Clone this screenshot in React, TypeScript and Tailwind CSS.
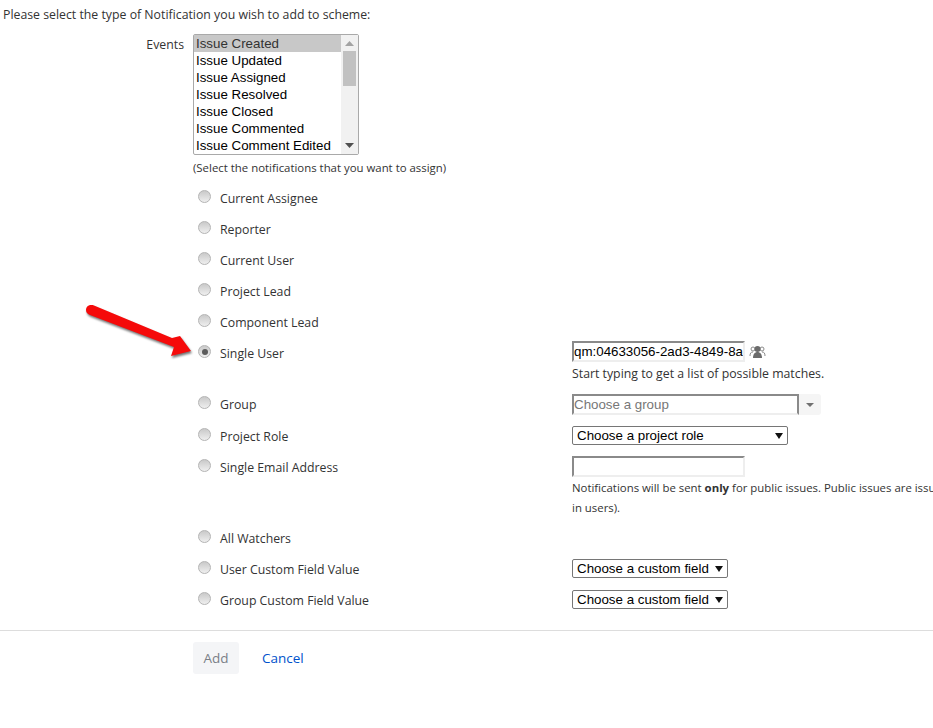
const events = [
  'Issue Created',
  'Issue Updated',
  'Issue Assigned',
  'Issue Resolved',
  'Issue Closed',
  'Issue Commented',
  'Issue Comment Edited',
];

function Radio({ checked = false }: { checked?: boolean }) {
  return (
    <span className="flex h-[13px] w-[13px] shrink-0 items-center justify-center rounded-full border border-[#b4b4b4] bg-gradient-to-b from-[#c9c9c9] to-[#efefef]">
      {checked && <span className="h-[6px] w-[6px] rounded-full bg-[#5c5c5c]" />}
    </span>
  );
}

function Row({
  label,
  checked,
  className,
  children,
}: {
  label: string;
  checked?: boolean;
  className: string;
  children?: React.ReactNode;
}) {
  return (
    <div className={`flex items-start ${className}`}>
      <div className="ml-[198px] mt-[2px]">
        <Radio checked={checked} />
      </div>
      <div className="ml-[9px] mt-[2px] w-[352px] shrink-0 leading-[18px] text-[#333]">{label}</div>
      <div className="min-w-0 flex-1">{children}</div>
    </div>
  );
}

function NativeSelect({ text, width }: { text: string; width: string }) {
  return (
    <div className={`flex h-[19px] items-center justify-between whitespace-nowrap rounded-[2px] border border-[#767676] bg-white pl-[4px] pr-[4px] font-['Liberation_Sans',sans-serif] text-[13.33px] text-black ${width}`}>
      <span>{text}</span>
      <svg width="8" height="6" viewBox="0 0 8 6">
        <path d="M0 0h8L4 6z" fill="#111" />
      </svg>
    </div>
  );
}

function Input({ children }: { children?: React.ReactNode }) {
  return (
    <div className="h-[21px] w-[173px] overflow-hidden whitespace-nowrap border-2 border-b-[#eee] border-l-[#8a8a8a] border-r-[#eee] border-t-[#8a8a8a] bg-white font-['Liberation_Sans',sans-serif] text-[13.33px] leading-[17px] text-black">
      {children}
    </div>
  );
}

export default function App() {
  return (
    <div className="relative h-[728px] w-[933px] overflow-hidden bg-white font-['Open_Sans',sans-serif] text-[12.3px] text-[#333]">
      <p className="pl-[3px] pt-[6px] leading-[18px]">Please select the type of Notification you wish to add to scheme:</p>

      <div className="mt-[10px] flex items-start">
        <label className="mt-[2px] w-[184px] text-right leading-[18px]">Events</label>
        <div className="ml-[9px] flex h-[121px] w-[166px] rounded-[2px] border border-[#a9a9a9] bg-white font-['Liberation_Sans',sans-serif] text-[13.33px] leading-[17px] text-black">
          <ul className="min-w-0 flex-1">
            {events.map((e, i) => (
              <li key={e} className={i === 0 ? 'bg-[#c8c8c8] pl-[2px] text-[#333]' : 'pl-[2px]'}>
                {e}
              </li>
            ))}
          </ul>
          <div className="flex w-[17px] shrink-0 flex-col items-center bg-[#f1f1f1]">
            <svg className="mt-[6px]" width="9" height="5" viewBox="0 0 9 5">
              <path d="M0 5L4.500 0 9 5z" fill="#a3a3a3" />
            </svg>
            <div className="mt-[5px] h-[35px] w-[13px] bg-[#c1c1c1]" />
            <svg className="mb-[6px] mt-auto" width="9" height="5" viewBox="0 0 9 5">
              <path d="M0 0L4.500 5 9 0z" fill="#505050" />
            </svg>
          </div>
        </div>
      </div>
      <p className="ml-[193px] mt-[4px] text-[11.4px] leading-[18px]">(Select the notifications that you want to assign)</p>

      <Row label="Current Assignee" className="mt-[11px] h-[31px]" />
      <Row label="Reporter" className="h-[31px]" />
      <Row label="Current User" className="h-[31px]" />
      <Row label="Project Lead" className="h-[31px]" />
      <Row label="Component Lead" className="h-[31px]" />
      <Row label="Single User" checked className="h-[51px]">
        <div className="-mt-[2px] flex items-center">
          <Input>qm:04633056-2ad3-4849-8a</Input>
          <svg className="ml-[4px]" width="17" height="14" viewBox="0 0 17 14">
            <circle cx="4" cy="4" r="2" fill="none" stroke="#8a8a8a" />
            <circle cx="13" cy="4" r="2" fill="none" stroke="#8a8a8a" />
            <path d="M1 11c0-3 1-4 3-4M16 11c0-3-1-4-3-4" fill="none" stroke="#8a8a8a" />
            <circle cx="8.500" cy="4" r="3" fill="#6b6b6b" />
            <path d="M4 13c0-4 2-6 4.500-6s4.500 2 4.500 6z" fill="#6b6b6b" />
          </svg>
        </div>
        <p className="mt-[3px] leading-[18px]">Start typing to get a list of possible matches.</p>
      </Row>
      <Row label="Group" className="h-[32px]">
        <div className="flex h-[21px] w-[250px]">
          <div className="h-[21px] w-[227px] border-2 border-b-[#eee] border-l-[#8a8a8a] border-r-[#8a8a8a] border-t-[#8a8a8a] bg-white font-['Liberation_Sans',sans-serif] text-[13.33px] leading-[17px] text-[#777]">
            Choose a group
          </div>
          <div className="flex w-[22px] items-center justify-center rounded-r-[3px] bg-[#f5f5f5]">
            <svg width="8" height="4" viewBox="0 0 8 4">
              <path d="M0 0h8L4 4z" fill="#707070" />
            </svg>
          </div>
        </div>
      </Row>
      <Row label="Project Role" className="h-[31px]">
        <NativeSelect text="Choose a project role" width="w-[216px]" />
      </Row>
      <Row label="Single Email Address" className="h-[71px]">
        <div className="-mt-[1px]">
          <Input />
        </div>
        <p className="mt-[1px] w-[361px] overflow-hidden whitespace-nowrap text-[11.4px] leading-[20px]">
          Notifications will be sent <strong>only</strong> for public issues. Public issues are issu
          <br />
          in users).
        </p>
      </Row>
      <Row label="All Watchers" className="h-[31px]" />
      <Row label="User Custom Field Value" className="h-[31px]">
        <NativeSelect text="Choose a custom field" width="w-[156px]" />
      </Row>
      <Row label="Group Custom Field Value" className="h-[40px]">
        <NativeSelect text="Choose a custom field" width="w-[156px]" />
      </Row>

      <hr className="border-[#ddd]" />
      <div className="ml-[193px] mt-[11px] flex items-center">
        <button className="h-[32px] w-[46px] rounded-[3px] bg-[#f4f5f7] text-[13.5px] text-[#7a7f87]">Add</button>
        <a className="ml-[23px] text-[13.5px] text-[#0052cc]">Cancel</a>
      </div>

      <svg
        className="absolute left-[80px] top-[300px] drop-shadow-[1px_2px_1px_rgba(0,0,0,0.55)]"
        width="135"
        height="65"
        viewBox="0 0 135 65"
      >
        <path
          d="M6 10C6 6 10 4 14 5.500L92 38L100 36L111 51L91 56L94 47L10 15C8 14 6 13 6 10z"
          fill="#f50a0a"
        />
      </svg>
    </div>
  );
}
